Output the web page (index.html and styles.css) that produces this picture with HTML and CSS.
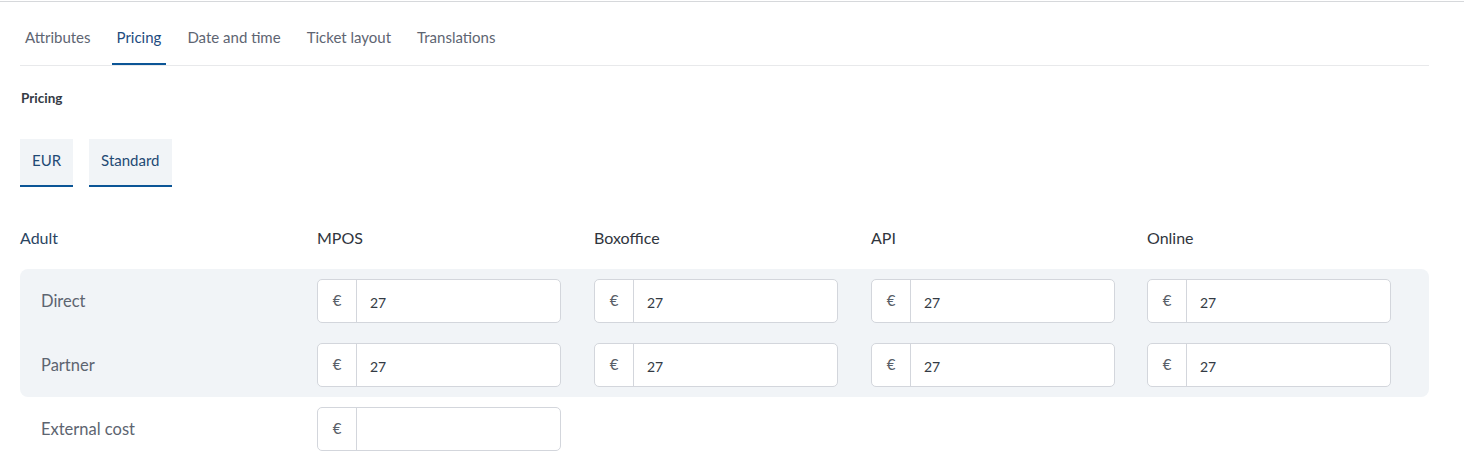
FILE: index.html
```html
<!DOCTYPE html>
<html>
<head>
<link rel="stylesheet" href="styles.css">
</head>
<body>

<div class="topline"></div>

<div class="page">
  <ul class="tabs">
    <li class="tab">Attributes</li>
    <li class="tab active">Pricing</li>
    <li class="tab">Date and time</li>
    <li class="tab">Ticket layout</li>
    <li class="tab">Translations</li>
  </ul>

  <h4 class="section-title">Pricing</h4>

  <div class="chips">
    <button type="button" class="chip">EUR</button>
    <button type="button" class="chip">Standard</button>
  </div>

  <div class="grid head-row">
    <div class="head-first">Adult</div>
    <div class="head">MPOS</div>
    <div class="head">Boxoffice</div>
    <div class="head">API</div>
    <div class="head">Online</div>
  </div>

  <div class="panel">
    <div class="grid price-row">
      <div class="row-label">Direct</div>
      <div class="money"><span class="cur">€</span><input type="text" value="27"></div>
      <div class="money"><span class="cur">€</span><input type="text" value="27"></div>
      <div class="money"><span class="cur">€</span><input type="text" value="27"></div>
      <div class="money"><span class="cur">€</span><input type="text" value="27"></div>
    </div>
    <div class="grid price-row">
      <div class="row-label">Partner</div>
      <div class="money"><span class="cur">€</span><input type="text" value="27"></div>
      <div class="money"><span class="cur">€</span><input type="text" value="27"></div>
      <div class="money"><span class="cur">€</span><input type="text" value="27"></div>
      <div class="money"><span class="cur">€</span><input type="text" value="27"></div>
    </div>
  </div>

  <div class="grid price-row extra">
    <div class="row-label">External cost</div>
    <div class="money"><span class="cur">€</span><input type="text" value=""></div>
  </div>
</div>

</body>
</html>
```

FILE: styles.css
```css
body {
  margin: 0;
  font-family: Lato, "Open Sans", Arial, sans-serif;
  color: #333a44;
  background: #fff;
}

.topline {
  margin-top: 1px;
  border-top: 1px solid #d6d8db;
}

.page {
  padding: 0 35px 0 20px;
}

.tabs {
  list-style: none;
  margin: 0;
  padding: 0;
  display: flex;
  gap: 16px;
  border-bottom: 1px solid #e8e9eb;
}

.tab {
  padding: 25px 5px 16px 5px;
  line-height: 20px;
  font-size: 15px;
  color: #5e6572;
  border-bottom: 2px solid transparent;
}

.tab.active {
  color: #1d4b80;
  border-bottom-color: #0b5596;
}

.section-title {
  margin: 24px 0 0 1px;
  font-size: 13.5px;
  line-height: 16px;
  font-weight: bold;
  color: #343a44;
}

.chips {
  display: flex;
  gap: 16px;
  margin-top: 33px;
}

.chip {
  height: 48px;
  padding: 0 12px 4px 12px;
  border: none;
  border-bottom: 2px solid #0b5596;
  background: #f1f4f7;
  font-family: inherit;
  font-size: 15px;
  color: #1f4a74;
}

.grid {
  display: grid;
  grid-template-columns: 297px 277px 277px 276px 277px;
  align-items: center;
}

.head-row {
  margin-top: 41px;
  line-height: 20px;
  font-size: 16px;
}

.head-first {
  color: #2b4562;
}

.head {
  color: #30353d;
}

.panel {
  margin-top: 21px;
  padding: 10px 0;
  background: #f1f4f7;
  border-radius: 8px;
  display: flex;
  flex-direction: column;
  gap: 20px;
}

.row-label {
  padding-left: 21px;
  padding-bottom: 1px;
  font-size: 16.5px;
  color: #5d6470;
}

.extra {
  margin-top: 10px;
}

.money {
  display: flex;
  width: 244px;
  height: 44px;
  box-sizing: border-box;
  border: 1px solid #d3d6dc;
  border-radius: 5px;
  background: #fff;
  overflow: hidden;
}

.cur {
  width: 38px;
  border-right: 1px solid #d3d6dc;
  display: flex;
  align-items: center;
  justify-content: center;
  padding-bottom: 2px;
  font-size: 15px;
  color: #5a5f68;
}

.money input {
  flex: 1;
  min-width: 0;
  border: none;
  outline: none;
  padding: 2px 0 0 13px;
  font-family: inherit;
  font-size: 14px;
  color: #333a44;
  background: transparent;
}
```
